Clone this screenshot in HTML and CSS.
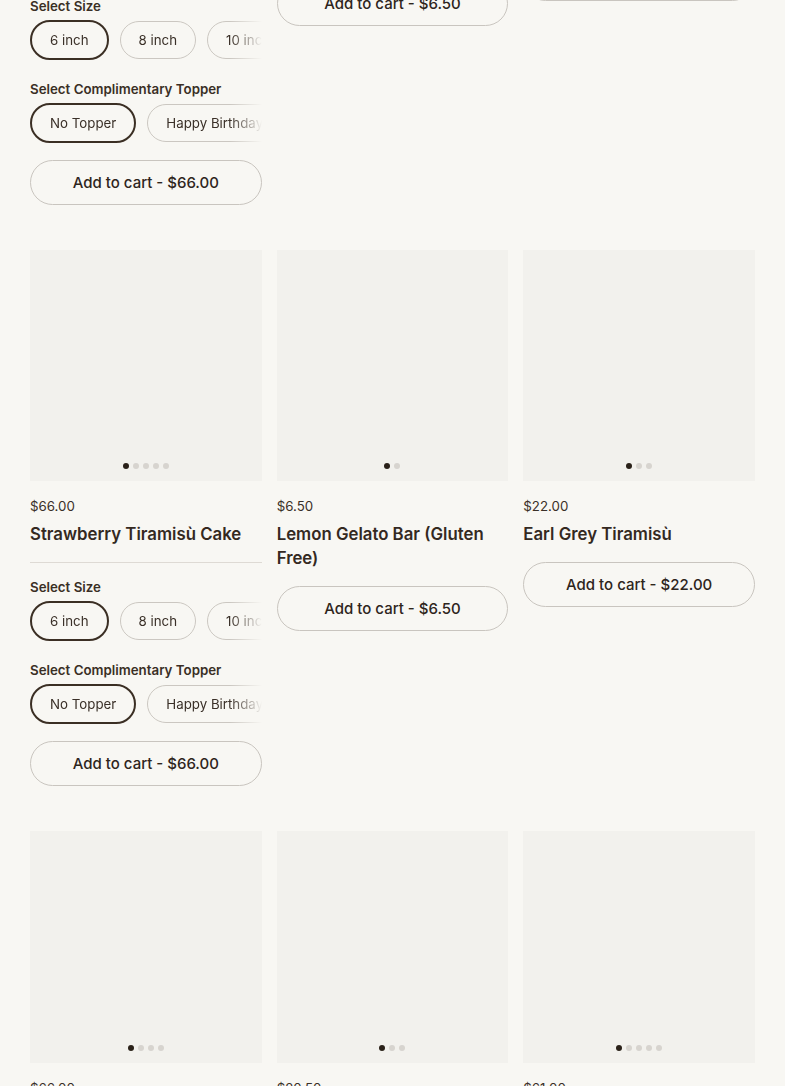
FILE: index.html
```html
<!DOCTYPE html>
<html lang="en">
<head>
<meta charset="utf-8">
<title>Shop</title>
<link rel="stylesheet" href="styles.css">
</head>
<body>
<main class="page">
  <div class="grid">
    <article class="card">
      <div class="media"><div class="dots"><span class="dot on"></span><span class="dot"></span><span class="dot"></span><span class="dot"></span></div></div>
      <p class="price">$66.00</p>
      <h3 class="title">Classic Tiramisù Cake</h3>
      <div class="options">
        <p class="opt-label">Select Size</p>
        <div class="pills">
          <button class="pill on">6 inch</button><button class="pill">8 inch</button><button class="pill">10 inch</button>
        </div>
        <p class="opt-label second">Select Complimentary Topper</p>
        <div class="pills">
          <button class="pill on">No Topper</button><button class="pill">Happy Birthday</button><button class="pill">Congratulations</button>
        </div>
      </div>
      <button class="cart">Add to cart - $66.00</button>
    </article>
    <article class="card">
      <div class="media"><div class="dots"><span class="dot on"></span><span class="dot"></span></div></div>
      <p class="price">$6.50</p>
      <h3 class="title">Pistachio Gelato Bar</h3>
      <button class="cart">Add to cart - $6.50</button>
    </article>
    <article class="card">
      <div class="media"><div class="dots"><span class="dot on"></span><span class="dot"></span><span class="dot"></span></div></div>
      <h3 class="title first">Tiramisù Cup</h3>
      <button class="cart">Add to cart - $9.50</button>
    </article>

    <article class="card">
      <div class="media"><div class="dots"><span class="dot on"></span><span class="dot"></span><span class="dot"></span><span class="dot"></span><span class="dot"></span></div></div>
      <p class="price">$66.00</p>
      <h3 class="title">Strawberry Tiramisù Cake</h3>
      <div class="options">
        <p class="opt-label">Select Size</p>
        <div class="pills">
          <button class="pill on">6 inch</button><button class="pill">8 inch</button><button class="pill">10 inch</button>
        </div>
        <p class="opt-label second">Select Complimentary Topper</p>
        <div class="pills">
          <button class="pill on">No Topper</button><button class="pill">Happy Birthday</button><button class="pill">Congratulations</button>
        </div>
      </div>
      <button class="cart">Add to cart - $66.00</button>
    </article>
    <article class="card">
      <div class="media"><div class="dots"><span class="dot on"></span><span class="dot"></span></div></div>
      <p class="price">$6.50</p>
      <h3 class="title">Lemon Gelato Bar (Gluten Free)</h3>
      <button class="cart">Add to cart - $6.50</button>
    </article>
    <article class="card">
      <div class="media"><div class="dots"><span class="dot on"></span><span class="dot"></span><span class="dot"></span></div></div>
      <p class="price">$22.00</p>
      <h3 class="title">Earl Grey Tiramisù</h3>
      <button class="cart">Add to cart - $22.00</button>
    </article>

    <article class="card">
      <div class="media"><div class="dots"><span class="dot on"></span><span class="dot"></span><span class="dot"></span><span class="dot"></span></div></div>
      <p class="price">$66.00</p>
      <h3 class="title">Matcha Tiramisù Cake</h3>
      <button class="cart">Add to cart - $66.00</button>
    </article>
    <article class="card">
      <div class="media"><div class="dots"><span class="dot on"></span><span class="dot"></span><span class="dot"></span></div></div>
      <p class="price">$20.50</p>
      <h3 class="title">Tiramisù Classico</h3>
      <button class="cart">Add to cart - $20.50</button>
    </article>
    <article class="card">
      <div class="media"><div class="dots"><span class="dot on"></span><span class="dot"></span><span class="dot"></span><span class="dot"></span><span class="dot"></span></div></div>
      <p class="price">$61.00</p>
      <h3 class="title">Tiramisù Party Tray</h3>
      <button class="cart">Add to cart - $61.00</button>
    </article>
  </div>
</main>
</body>
</html>
```

FILE: styles.css
```css
* { box-sizing: border-box; }

html, body {
  margin: 0;
  background: #f8f7f3;
}

body {
  font-family: Inter, "Noto Sans", sans-serif;
  color: #2e251c;
}

/* page is shown scrolled down: first row begins above the viewport */
.page {
  margin-top: -332px;
  padding: 0 30px 60px;
}

.grid {
  display: grid;
  grid-template-columns: repeat(3, 1fr);
  column-gap: 15px;
  row-gap: 45px;
  align-items: start;
}

.card {
  display: flex;
  flex-direction: column;
  min-width: 0;
}

.media {
  position: relative;
  aspect-ratio: 1 / 1;
  background: #f2f1ed;
}

.dots {
  position: absolute;
  left: 0;
  right: 0;
  bottom: 12px;
  display: flex;
  justify-content: center;
  gap: 4px;
}

.dot {
  width: 6px;
  height: 6px;
  border-radius: 50%;
  background: #d7d4cf;
}

.dot.on { background: #2a2119; }

.price {
  margin: 15px 0 0;
  font-size: 13.3px;
  line-height: 20px;
  color: #3a3028;
}

.title {
  margin: 6px 0 0;
  font-size: 16.8px;
  line-height: 24px;
  font-weight: 600;
  color: #34291f;
}

.title.first { margin-top: 16px; }

.options {
  margin-top: 16px;
  padding-top: 14px;
  border-top: 1px solid #dedad4;
}

.opt-label {
  margin: 0;
  font-size: 13.3px;
  line-height: 20px;
  font-weight: 600;
  color: #3a2f25;
}

.opt-label.second { margin-top: 19px; }

.pills {
  display: flex;
  align-items: center;
  gap: 11px;
  margin-top: 4px;
  overflow: hidden;
  -webkit-mask-image: linear-gradient(to right, #000 calc(100% - 32px), transparent);
  mask-image: linear-gradient(to right, #000 calc(100% - 32px), transparent);
}

.pill {
  flex: none;
  font: inherit;
  font-size: 13.3px;
  line-height: 18px;
  padding: 9px 18px;
  border: 1px solid #cbc7c1;
  border-radius: 999px;
  background: transparent;
  color: #3a3028;
  white-space: nowrap;
}

.pill.on {
  border: 2px solid #3b2f24;
}

.cart {
  margin-top: 16px;
  height: 45px;
  width: 100%;
  font: inherit;
  font-size: 15px;
  font-weight: 500;
  color: #2e251c;
  background: transparent;
  border: 1px solid #c9c5bf;
  border-radius: 999px;
}

.options + .cart { margin-top: 17px; }
```
